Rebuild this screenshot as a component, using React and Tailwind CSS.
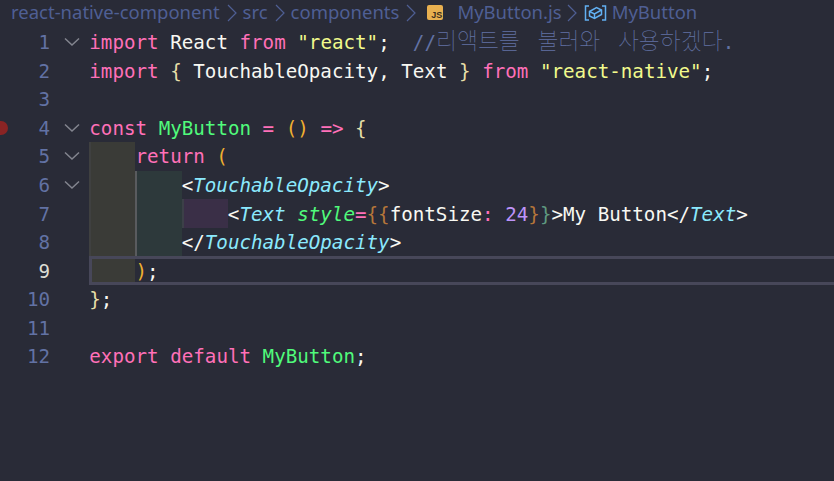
const MONO = "font-['DejaVu_Sans_Mono',monospace]"
const HANGUL = "font-['Noto_Sans_CJK_KR',sans-serif] text-[22.8px] leading-none font-thin"

const Kw = ({ children }) => <span className="text-[#ff70b8]">{children}</span>
const Fn = ({ children }) => <span className="text-[#50fa7b]">{children}</span>
const Str = ({ children }) => <span className="text-[#f1fa8c]">{children}</span>
const Tag = ({ children }) => <span className="italic text-[#8be9fd]">{children}</span>
const Or = ({ children }) => <span className="text-[#f0b030]">{children}</span>
const Br = ({ children }) => <span className="text-[#e6dfa8]">{children}</span>
const Wh = ({ children }) => <span className="text-[#f8f8f2]">{children}</span>

const Chevron = ({ className = 'ml-[5px] mr-[4px]' }) => (
  <svg width="14" height="22" viewBox="0 0 14 22" fill="none" className={`shrink-0 ${className}`}>
    <path d="M3 3 L11 11 L3 19" stroke="#4f5f94" strokeWidth="1.2" />
  </svg>
)

const Fold = () => (
  <svg width="16" height="10" viewBox="0 0 16 10" fill="none">
    <path d="M1 1.5 L8 8 L15 1.5" stroke="#83858f" strokeWidth="1.5" />
  </svg>
)

const SymbolIcon = () => (
  <svg width="23" height="18" viewBox="0 0 23 18" fill="none" stroke="#62b0f2" strokeWidth="1.5" className="ml-[3px] shrink-0">
    <path d="M5 2 H1.5 V16 H5" />
    <path d="M18 2 H21.5 V16 H18" />
    <path d="M5.5 7.5 L12.5 3.5 L17.5 6 V10.5 L10.5 14.5 L5.5 12 Z" />
    <path d="M5.5 7.5 L10.5 10 L17.5 6 M10.5 10 V14.5" />
  </svg>
)

const Indent = ({ color, guide }) => (
  <span className={`h-full w-[46.2px] shrink-0 ${color} ${guide}`} />
)
const guide1 = <Indent color="bg-[#3a3b37]" guide="border-l-2 border-[#3f4040]" />
const guide1Active = <Indent color="bg-[#3a3b37]" guide="border-l-[3px] border-[#474759]" />
const guide2 = <Indent color="bg-[#2d393b]" guide="border-l-2 border-[#595b5e]" />
const guide3 = <Indent color="bg-[#3a2f47]" guide="border-l-2 border-[#3c4048]" />

const lines = [
  {
    fold: true,
    code: (
      <>
        <Kw>import</Kw> <Wh>React</Wh> <Kw>from</Kw> <Str>"react"</Str><Wh>;</Wh>{'  '}
        <span className="text-[#6272a4] [word-spacing:6px]">
          //<span className={HANGUL}>리액트를</span>{' '}
          <span className={HANGUL}>불러와</span>{' '}
          <span className={HANGUL}>사용하겠다</span>.
        </span>
      </>
    ),
  },
  {
    code: (
      <>
        <Kw>import</Kw> <Br>{'{'}</Br> <Wh>TouchableOpacity, Text</Wh> <Br>{'}'}</Br> <Kw>from</Kw> <Str>"react-native"</Str><Wh>;</Wh>
      </>
    ),
  },
  { code: null },
  {
    fold: true,
    breakpoint: true,
    code: (
      <>
        <Kw>const</Kw> <Fn>MyButton</Fn> <Kw>=</Kw> <Or>()</Or> <Kw>=&gt;</Kw> <Br>{'{'}</Br>
      </>
    ),
  },
  {
    fold: true,
    guides: [guide1],
    code: (
      <>
        <Kw>return</Kw> <Or>(</Or>
      </>
    ),
  },
  {
    fold: true,
    guides: [guide1, guide2],
    code: (
      <>
        <Wh>&lt;</Wh><Tag>TouchableOpacity</Tag><Wh>&gt;</Wh>
      </>
    ),
  },
  {
    guides: [guide1, guide2, guide3],
    code: (
      <>
        <Wh>&lt;</Wh><Tag>Text</Tag> <span className="italic text-[#50fa7b]">style</span><Kw>=</Kw>
        <span className="text-[#b5763a]">{'{'}</span><span className="text-[#b5763a]">{'{'}</span>
        <Wh>fontSize</Wh><Kw>:</Kw> <span className="text-[#bd93f9]">24</span>
        <span className="text-[#b5763a]">{'}'}</span><span className="text-[#5f9a80]">{'}'}</span>
        <Wh>&gt;My Button&lt;/</Wh><Tag>Text</Tag><Wh>&gt;</Wh>
      </>
    ),
  },
  {
    guides: [guide1, guide2],
    code: (
      <>
        <Wh>&lt;/</Wh><Tag>TouchableOpacity</Tag><Wh>&gt;</Wh>
      </>
    ),
  },
  {
    active: true,
    guides: [guide1Active],
    code: (
      <>
        <Or>)</Or><Wh>;</Wh>
      </>
    ),
  },
  {
    code: (
      <>
        <Br>{'}'}</Br><Wh>;</Wh>
      </>
    ),
  },
  { code: null },
  {
    code: (
      <>
        <Kw>export</Kw> <Kw>default</Kw> <Fn>MyButton</Fn><Wh>;</Wh>
      </>
    ),
  },
]

export default function App() {
  return (
    <div className="h-[481px] w-[834px] overflow-hidden bg-[#292b37]">
      <div className="flex h-[28px] items-center pb-[3px] pl-[11px] font-['Noto_Sans',sans-serif] text-[18.5px] leading-none text-[#4f5f94]">
        <span>react-native-component</span>
        <Chevron />
        <span>src</span>
        <Chevron />
        <span>components</span>
        <Chevron className="ml-[5px] mr-[2px]" />
        <span className="ml-[7px] mr-[14px] flex h-[15px] w-[16px] shrink-0 items-end justify-end rounded-[2px] bg-[#e8b050] pr-[1px] font-['Liberation_Sans',sans-serif] text-[9px] font-bold leading-[10px] text-[#3a2f20]">
          JS
        </span>
        <span>MyButton.js</span>
        <Chevron className="ml-[3px] mr-[2px]" />
        <SymbolIcon />
        <span className="ml-[5px]">MyButton</span>
      </div>
      <div className={`${MONO} text-[19.2px]`}>
        {lines.map((line, i) => (
          <div key={i} className="relative flex h-[28.55px] items-stretch leading-[28.55px]">
            {line.breakpoint && (
              <span className="absolute left-[-6px] top-[7px] h-[14px] w-[14px] rounded-full bg-[#8a2424]" />
            )}
            <span className={`w-[50px] shrink-0 pt-[1.3px] text-right ${line.active ? 'text-[#dcdcd4]' : 'text-[#6272a4]'}`}>
              {i + 1}
            </span>
            <span className="flex w-[39.3px] shrink-0 items-center justify-center pl-[5px]">
              {line.fold && <Fold />}
            </span>
            <div
              className={`flex min-w-0 flex-1 items-center whitespace-pre ${
                line.active ? 'border-y-[3px] border-[#474759]' : ''
              }`}
            >
              {line.guides}
              <span className="pt-[2.6px]">{line.code}</span>
            </div>
          </div>
        ))}
      </div>
    </div>
  )
}
